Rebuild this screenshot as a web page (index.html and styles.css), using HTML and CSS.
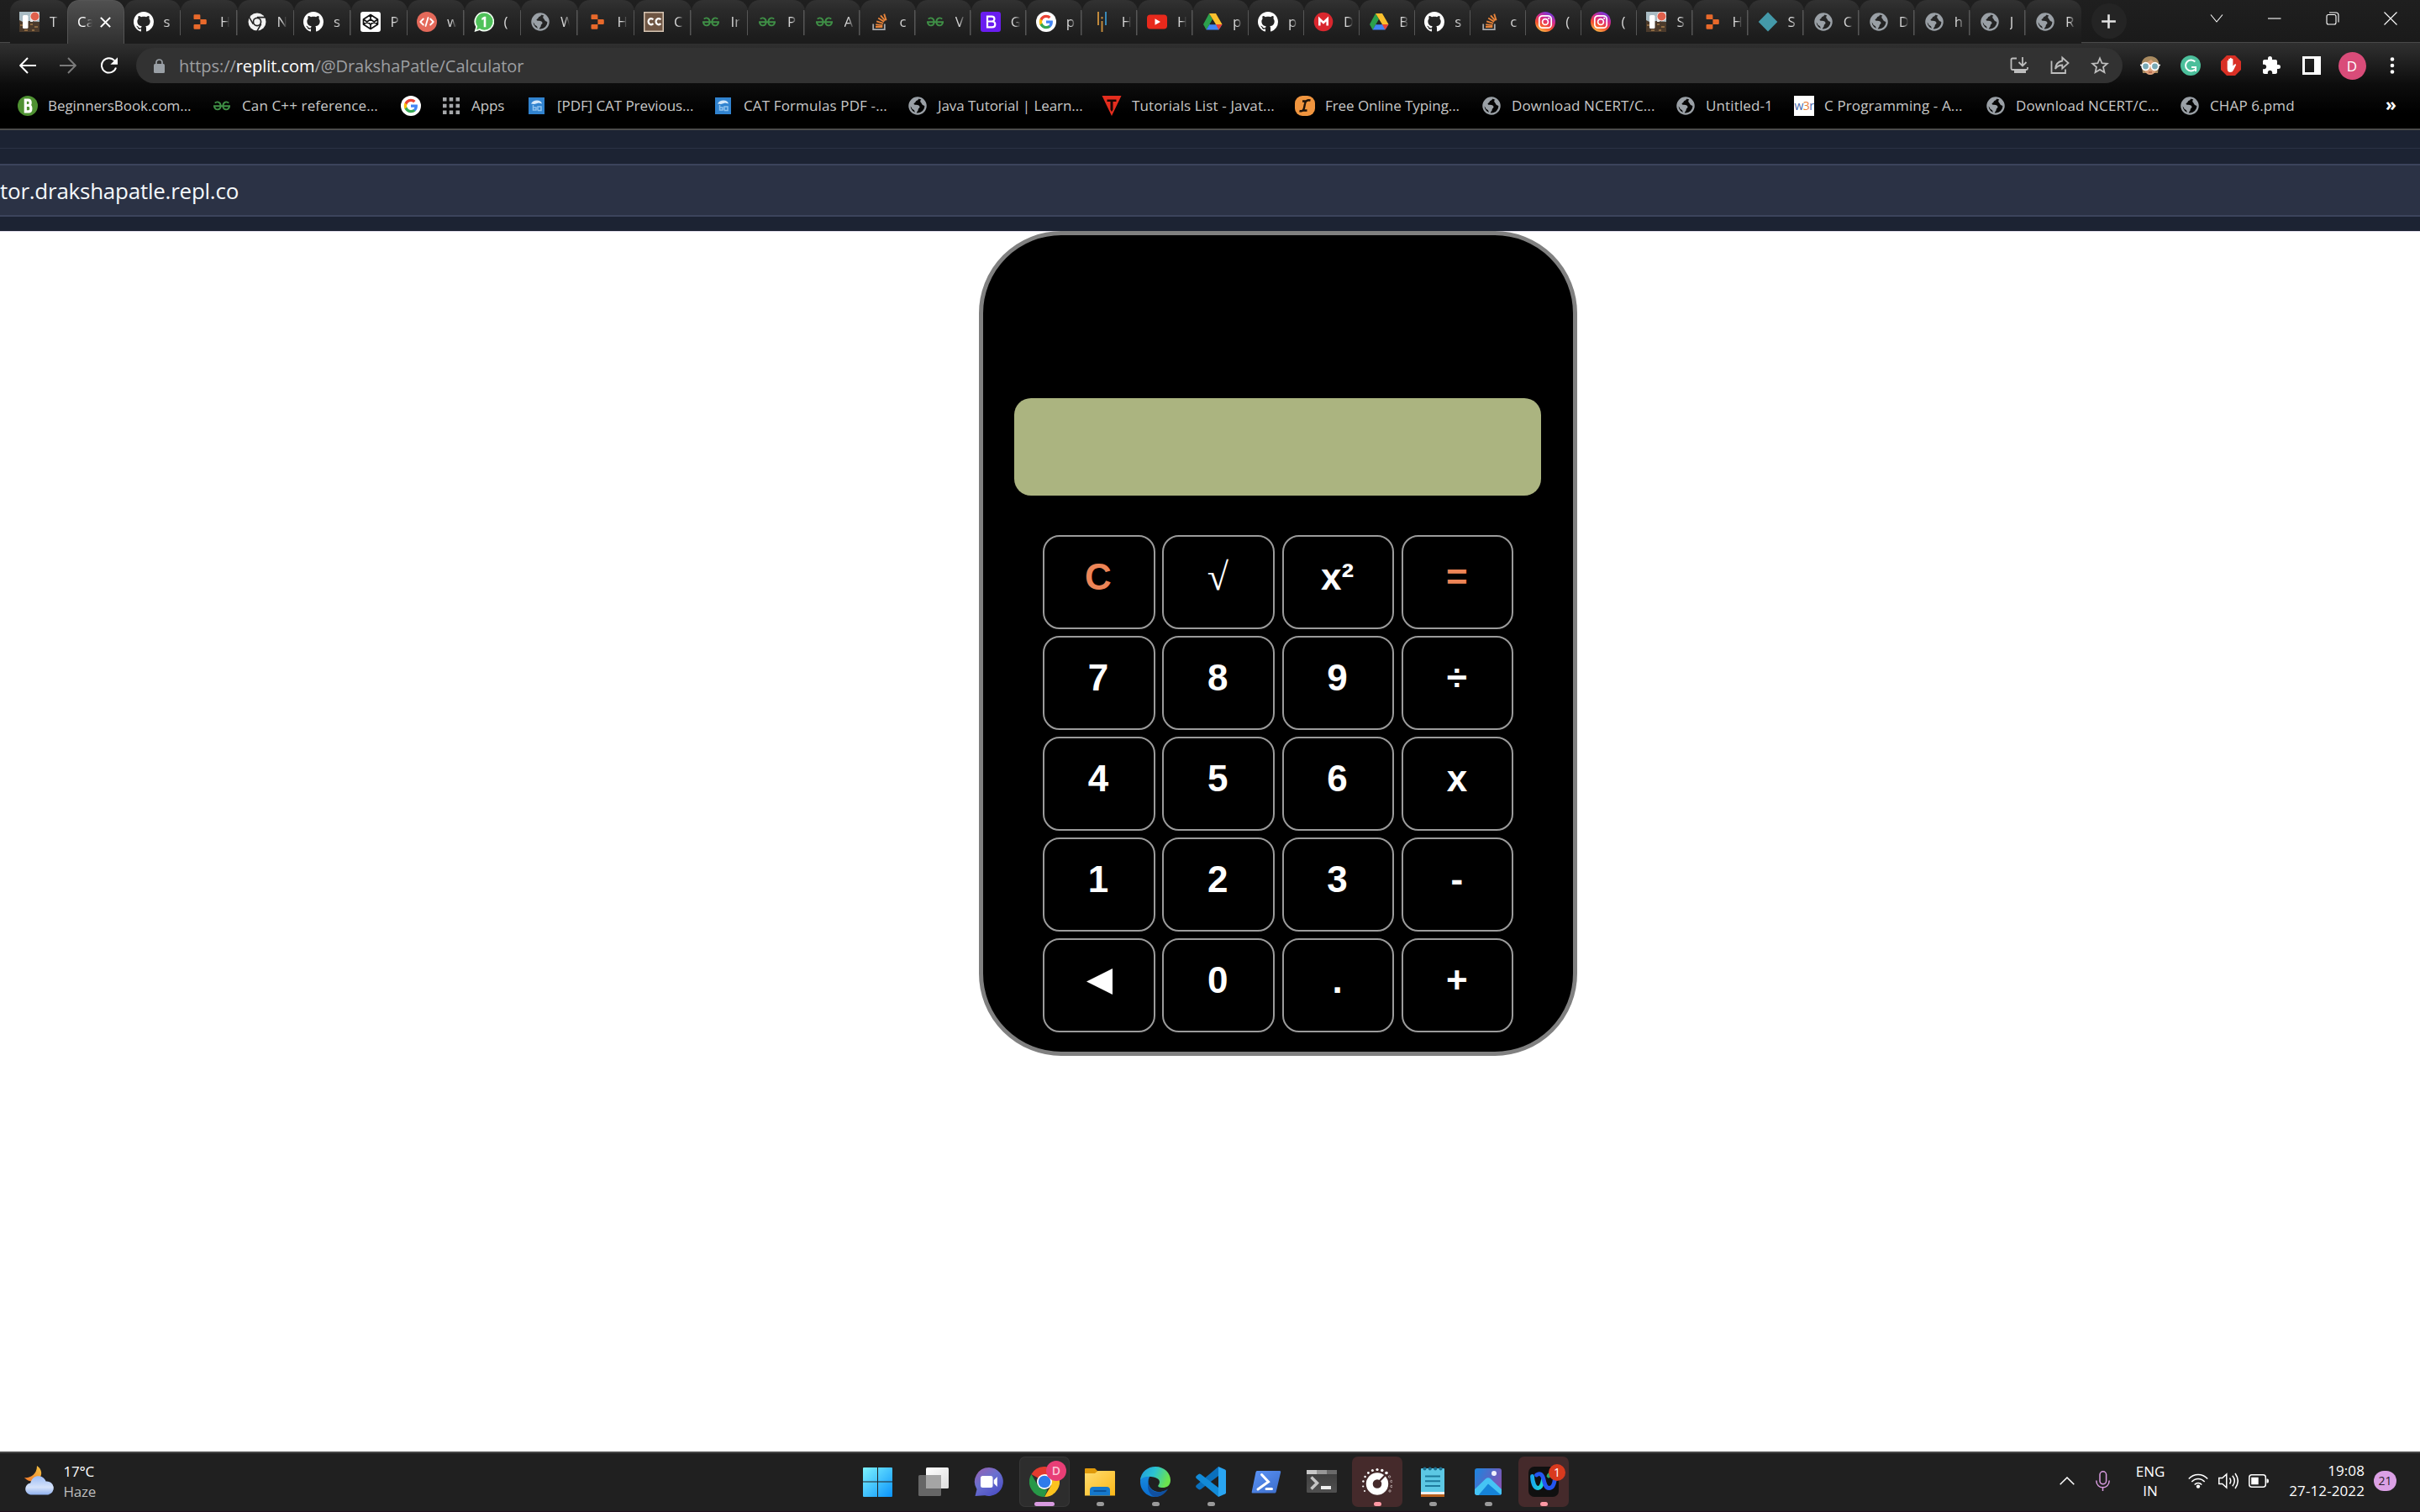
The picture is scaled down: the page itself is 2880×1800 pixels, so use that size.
FILE: index.html
```html
<!DOCTYPE html>
<html lang="en">
<head>
<meta charset="utf-8">
<title>Calculator</title>
<link rel="stylesheet" href="styles.css">
</head>
<body>
<svg class="defs" aria-hidden="true">
  <defs>
    <linearGradient id="g-ig" x1="0.2" y1="1" x2="0.7" y2="0"><stop offset="0" stop-color="#fdc84a"/><stop offset=".35" stop-color="#f5502f"/><stop offset=".65" stop-color="#d62a8c"/><stop offset="1" stop-color="#6b3ae0"/></linearGradient>
    <linearGradient id="g-win" x1="0" y1="0" x2="1" y2="1"><stop offset="0" stop-color="#7df3ff"/><stop offset="1" stop-color="#0a93fb"/></linearGradient>
    <linearGradient id="g-cloud" x1="0" y1="0" x2="0" y2="1"><stop offset="0" stop-color="#9dbdf5"/><stop offset=".6" stop-color="#d5e2fa"/><stop offset="1" stop-color="#8fb0ee"/></linearGradient>
    <linearGradient id="g-moon" x1="0" y1="1" x2="1" y2="0"><stop offset="0" stop-color="#f0762a"/><stop offset="1" stop-color="#f5c542"/></linearGradient>
    <linearGradient id="g-chat" x1="0" y1="0" x2="0.7" y2="1"><stop offset="0" stop-color="#9a5fae"/><stop offset=".5" stop-color="#6a70d0"/><stop offset="1" stop-color="#4c4fc4"/></linearGradient>
    <linearGradient id="g-fold" x1="0" y1="0" x2="1" y2="1"><stop offset="0" stop-color="#ffdc70"/><stop offset="1" stop-color="#fbb818"/></linearGradient>
    <linearGradient id="g-edge" x1="0" y1="0" x2="1" y2=".3"><stop offset="0" stop-color="#2099dd"/><stop offset=".5" stop-color="#2bc3d2"/><stop offset="1" stop-color="#6be34e"/></linearGradient>
    <linearGradient id="g-edge2" x1="0" y1="0" x2="0" y2="1"><stop offset="0" stop-color="#1a8fe0"/><stop offset="1" stop-color="#0a6dd0"/></linearGradient>
    <linearGradient id="g-ps" x1="0" y1="0" x2="1" y2="1"><stop offset="0" stop-color="#5a94f8"/><stop offset="1" stop-color="#3c6cc8"/></linearGradient>
    <linearGradient id="g-term" x1="0" y1="0" x2="0" y2="1"><stop offset="0" stop-color="#3c3c3c"/><stop offset="1" stop-color="#505050"/></linearGradient>
    <linearGradient id="g-photo" x1="0" y1="0" x2="1" y2=".5"><stop offset="0" stop-color="#1a86e0"/><stop offset="1" stop-color="#7f55b5"/></linearGradient>
    <linearGradient id="g-task" x1="0" y1="0" x2="1" y2="1"><stop offset="0" stop-color="#fff"/><stop offset="1" stop-color="#dedede"/></linearGradient>
    <linearGradient id="g-wx1" x1="0" y1="0" x2="1" y2="0"><stop offset="0" stop-color="#18a8ee"/><stop offset="1" stop-color="#1fe0d0"/></linearGradient>
  </defs>
  <symbol id="gh" viewBox="0 0 16 16"><path fill="#fff" d="M8 0C3.58 0 0 3.58 0 8c0 3.54 2.29 6.53 5.47 7.59.4.07.55-.17.55-.38 0-.19-.01-.82-.01-1.49-2.01.37-2.53-.49-2.69-.94-.09-.23-.48-.94-.82-1.13-.28-.15-.68-.52-.01-.53.63-.01 1.08.58 1.23.82.72 1.21 1.87.87 2.33.66.07-.52.28-.87.51-1.07-1.78-.2-3.64-.89-3.64-3.95 0-.87.31-1.59.82-2.15-.08-.2-.36-1.02.08-2.12 0 0 .67-.21 2.2.82.64-.18 1.32-.27 2-.27.68 0 1.36.09 2 .27 1.53-1.04 2.2-.82 2.2-.82.44 1.1.16 1.92.08 2.12.51.56.82 1.27.82 2.15 0 3.07-1.87 3.75-3.65 3.95.29.25.54.73.54 1.48 0 1.07-.01 1.93-.01 2.2 0 .21.15.46.55.38A8.013 8.013 0 0016 8c0-4.42-3.58-8-8-8z"/></symbol>
  <symbol id="rp" viewBox="0 0 24 24"><path fill="#e8692b" d="M5.700 3.200h5.500q1.200 0 1.200 1.200v4.700H5.700q-1.200 0-1.200-1.200V4.400q0-1.200 1.200-1.200zM12.400 9.100h6.200q1.200 0 1.200 1.200v3.400q0 1.200-1.200 1.200h-6.200zM5.700 14.900h6.700v4.700q0 1.200-1.200 1.200H5.700q-1.200 0-1.200-1.200v-3.500q0-1.200 1.200-1.200z"/></symbol>
  <symbol id="photo" viewBox="0 0 24 24"><path fill="#a9bcc4" d="M0 0h24v24H0z"/><path fill="#4b3a2b" d="M0 10l4 2 8-1 12 1v12H0z"/><path fill="#8d6a42" d="M1 15h3v2H1zM6 21h4v2H6zM13 14h3v2h-3zM18 17h4v2h-4zM15 21h3v2h-3z"/><rect x="4" y="4" width="6.500" height="16" rx="1.500" fill="#fff"/><path d="M13 4h3v8h-3z" fill="#e8e8e8"/><circle cx="18.500" cy="5.500" r="5.800" fill="#f2f2f2"/><circle cx="18.500" cy="5.500" r="5" fill="#e0604c"/></symbol>
  <symbol id="cr" viewBox="0 0 24 24"><circle cx="12" cy="12" r="10.500" fill="#f2f2f2"/><circle cx="12" cy="12" r="5.400" fill="#222"/><circle cx="12" cy="12" r="3.700" fill="#f2f2f2"/><path d="M12 6.600h10M7.300 14.700l-5-8.600M16.700 14.700l-5 8.600" stroke="#222" stroke-width="1.600"/></symbol>
  <symbol id="cp" viewBox="0 0 24 24"><rect width="24" height="24" rx="3" fill="#fff"/><path fill="none" stroke="#111" stroke-width="1.700" stroke-linejoin="round" d="M12 3.500l8.500 5.500v6L12 20.500 3.500 15V9zM12 3.500V9M12 15v5.500M3.500 9l8.500 6 8.500-6M3.500 15L12 9l8.500 6"/></symbol>
  <symbol id="code" viewBox="0 0 24 24"><circle cx="12" cy="12" r="12" fill="#e4695a"/><path fill="none" stroke="#fff" stroke-width="1.800" stroke-linecap="round" stroke-linejoin="round" d="M7.800 8.500L4.300 12l3.500 3.500M16.200 8.500l3.500 3.500-3.500 3.500M13.500 7l-3 10"/></symbol>
  <symbol id="wa" viewBox="0 0 24 24"><path fill="#f4fff4" d="M12.500 0a11.700 11.700 0 0 1 0 23.400c-2.200 0-4-.5-5.700-1.500L.5 24l1.800-6A11.700 11.700 0 0 1 12.500 0z"/><path fill="#4fc25a" d="M12.500 1.500a10 10 0 0 1 0 20.200c-2 0-3.800-.6-5.400-1.600l-4.200 1.300 1.300-4A10 10 0 0 1 12.500 1.500z"/><path fill="#fff" d="M9.300 7.600l3-1.800h2v12.400h-2.600V9L9.300 10z"/></symbol>
  <symbol id="globe" viewBox="0 0 24 24"><circle cx="12" cy="12" r="9.600" fill="none" stroke="#9aa0a6" stroke-width="2.300"/><path fill="#9aa0a6" d="M2.500 12l.5-3.500 4-5.500 6-1.300c.3 2.300-.2 3.600-2 4-1.600.5-1 2.200-2.600 2.700-1.500.5-.8 2.500.9 2.400 3.500-.2 5 .7 5.200 2.500.2 1.700-1.800 1.500-1.800 3.200 0 1.800-1.500 2.200-2.200 4.300l-1.800 0c0-2.500-.5-3.700-2.200-4.500C4.800 15.500 5 13 2.500 12zM17 4c-2 1.300-2.300 3-1 4 1.200 1 1 3 3 3.400 1.200.2 1.500 1 2.500 1.300L21 8z"/></symbol>
  <symbol id="cc" viewBox="0 0 24 24"><path fill="#d8c6b4" d="M0 0h24v24H0z"/><path fill="#6f5644" d="M1.500 1.500h21v21h-21z"/><path fill="none" stroke="#fff" stroke-width="2.300" d="M11.300 9.400A3.200 3.600 0 1 0 11.300 14M20.300 9.400A3.200 3.600 0 1 0 20.300 14"/></symbol>
  <symbol id="gfg" viewBox="0 0 24 24"><path fill="none" stroke="#3f8f46" stroke-width="1.900" d="M3.800 8.700C6 6.300 10.400 7.200 10.600 11.800c.2 5.300-6.100 6.300-7.600 1.200M20.200 8.700C18 6.300 13.600 7.200 13.400 11.800c-.2 5.300 6.100 6.300 7.600 1.200M2 12.300h20"/></symbol>
  <symbol id="so" viewBox="0 0 24 24"><path fill="none" stroke="#a7a9ac" stroke-width="1.800" d="M4.200 14.500v6.600h13.600v-6.600"/><path fill="none" stroke="#e8843a" stroke-width="1.900" d="M7 18h8.300M7.200 15.200l8.200.9M8.200 11.400l7.900 2.400M10.200 7.500l7 4.400M13 4.300l5.300 6.200M17.200 2.600l2.400 7.700"/></symbol>
  <symbol id="bs" viewBox="0 0 24 24"><rect width="24" height="24" rx="3" fill="#6a1df0"/><path fill="none" stroke="#fff" stroke-width="2.200" d="M8 5.600h5.200c4.300 0 4.300 5.900 0 5.900H8h5.700c4.800 0 4.800 6.900 0 6.900H8z"/></symbol>
  <symbol id="goog" viewBox="0 0 24 24"><circle cx="12" cy="12" r="12" fill="#fff"/><g transform="translate(3 3) scale(.75)"><path fill="#4285f4" d="M22.560 12.250c0-.78-.07-1.530-.2-2.250H12v4.260h5.920c-.26 1.370-1.040 2.530-2.210 3.310v2.770h3.570c2.080-1.920 3.280-4.740 3.280-8.090z"/><path fill="#34a853" d="M12 23c2.970 0 5.460-.98 7.280-2.660l-3.570-2.770c-.98.66-2.230 1.060-3.710 1.060-2.860 0-5.290-1.930-6.160-4.530H2.180v2.840C3.990 20.530 7.700 23 12 23z"/><path fill="#fbbc05" d="M5.840 14.090c-.22-.66-.35-1.360-.35-2.090s.13-1.430.35-2.090V7.070H2.180C1.430 8.550 1 10.220 1 12s.43 3.450 1.180 4.930l3.660-2.840z"/><path fill="#ea4335" d="M12 5.380c1.620 0 3.060.56 4.210 1.640l3.150-3.150C17.450 2.090 14.970 1 12 1 7.700 1 3.990 3.470 2.180 7.070l3.660 2.840c.87-2.600 3.300-4.530 6.160-4.530z"/></g></symbol>
  <symbol id="bars" viewBox="0 0 24 24"><path stroke="#c98f3d" stroke-width="1.900" d="M8 0v16M12.500 6v2.500M12.500 11v13"/><path stroke="#3a8fc0" stroke-width="1.900" d="M17 0v16"/></symbol>
  <symbol id="yt" viewBox="0 0 24 24"><rect y="3.500" width="24" height="17" rx="4" fill="#e8291c"/><path fill="#fff" d="M9.500 8.300l6.500 3.700-6.500 3.700z"/></symbol>
  <symbol id="drive" viewBox="0 0 24 24"><path fill="#2ca04c" d="M8 2L1 15l3.600 6.500L12 9z"/><path fill="#fbc02d" d="M8 2h8l7.500 13h-7.600z"/><path fill="#4285f4" d="M4.600 21.500h14.800l4.100-6.500H8.400z"/><path fill="#ea4335" d="M15.900 15h7.600l-4.100 6.500z"/><path fill="#242424" d="M12 9.500l3.600 5.700H8.600z"/></symbol>
  <symbol id="mm" viewBox="0 0 24 24"><circle cx="12" cy="12" r="11.300" fill="#d9272e"/><path fill="none" stroke="#fff" stroke-width="2.600" d="M7.300 16.500V8.500L12 13l4.700-4.500v8"/></symbol>
  <symbol id="ig" viewBox="0 0 24 24"><circle cx="12" cy="12" r="12" fill="url(#g-ig)"/><g fill="none" stroke="#fff" stroke-width="1.700"><rect x="4.800" y="4.800" width="14.400" height="14.400" rx="4"/><circle cx="12" cy="12" r="3.400"/></g><circle cx="16.200" cy="7.800" r="1.100" fill="#fff"/></symbol>
  <symbol id="dia" viewBox="0 0 24 24"><path fill="#4499a9" d="M12 .5L23.300 12 12 23.500.7 12z"/></symbol>
  <symbol id="bb" viewBox="0 0 24 24"><circle cx="12" cy="12" r="12" fill="#4f9132"/><path fill="none" stroke="#fff" stroke-width="3.200" d="M9.300 5.200h3.400c3.300 0 3.300 6.300 0 6.300H9.300h3.800c3.700 0 3.700 7.300 0 7.300H9.300z"/></symbol>
  <symbol id="apps" viewBox="0 0 24 24"><path fill="#a6a8ab" d="M2 2h4.500v4.500H2zM9.700 2h4.500v4.500H9.700zM17.500 2H22v4.500h-4.500zM2 9.700h4.500v4.500H2zM9.700 9.700h4.500v4.500H9.700zM17.500 9.700H22v4.500h-4.500zM2 17.500h4.500V22H2zM9.700 17.500h4.500V22H9.700zM17.500 17.500H22V22h-4.500z"/></symbol>
  <symbol id="pdf" viewBox="0 0 24 24"><path fill="#3183cf" d="M2 2h19v20H2z"/><path fill="#d4e8fa" d="M5 9.500q2-4 7-4t6 4l-4-1-5 1.500z"/><path fill="none" stroke="#8fc2ee" stroke-width="1.500" d="M7.500 11v6h3.500v-3h-3M13 17.500v-4.500h4v4.500h-4"/></symbol>
  <symbol id="tt" viewBox="0 0 24 24"><path fill="#e52d1e" d="M.5 0h23L12 24z"/><path fill="#160402" d="M6.500 4.500h11V7h-4v9.500L12 19l-1.500-2.500V7h-4z"/></symbol>
  <symbol id="typ" viewBox="0 0 24 24"><rect width="24" height="24" rx="9" fill="#f0953f"/><path fill="none" stroke="#1d120a" stroke-width="2.400" d="M18.500 5.500c-4-1-6 1-6.500 4l-1 5c-.6 3-2.500 4.500-5.500 3.500M9 6.500h5M9.500 17.500h5"/></symbol>
  <symbol id="cloudmoon" viewBox="0 0 36 35"><path fill="url(#g-moon)" d="M15 0c5.500 3.500 6.800 10 3.300 14.500C14 20 5 20 0 14c6 1 15-3 15-14z"/><path fill="url(#g-cloud)" d="M7.500 34.500a7 7 0 0 1-.3-13.900C9 14 13 12 17 12.200c4.500.2 7.500 3 8.600 6.300a8 8 0 0 1 2.400 16z"/></symbol>
</svg>

<header class="browser">
  <nav class="tabs">
    <div class="tab"><svg><use href="#photo"/></svg><span>T</span></div>
    <div class="tab active"><span>Ca</span><svg class="close" viewBox="0 0 12 12"><path d="M.8.8l10.400 10.400M11.200.8L.8 11.200"/></svg></div>
    <div class="tab"><svg><use href="#gh"/></svg><span>s</span></div>
    <div class="tab"><svg><use href="#rp"/></svg><span>H</span></div>
    <div class="tab"><svg><use href="#cr"/></svg><span>N</span></div>
    <div class="tab"><svg><use href="#gh"/></svg><span>s</span></div>
    <div class="tab"><svg><use href="#cp"/></svg><span>P</span></div>
    <div class="tab"><svg><use href="#code"/></svg><span>w</span></div>
    <div class="tab"><svg><use href="#wa"/></svg><span>(</span></div>
    <div class="tab"><svg><use href="#globe"/></svg><span>W</span></div>
    <div class="tab"><svg><use href="#rp"/></svg><span>H</span></div>
    <div class="tab"><svg><use href="#cc"/></svg><span>C</span></div>
    <div class="tab"><svg><use href="#gfg"/></svg><span>In</span></div>
    <div class="tab"><svg><use href="#gfg"/></svg><span>P</span></div>
    <div class="tab"><svg><use href="#gfg"/></svg><span>A</span></div>
    <div class="tab"><svg><use href="#so"/></svg><span>c</span></div>
    <div class="tab"><svg><use href="#gfg"/></svg><span>V</span></div>
    <div class="tab"><svg><use href="#bs"/></svg><span>G</span></div>
    <div class="tab"><svg><use href="#goog"/></svg><span>p</span></div>
    <div class="tab"><svg><use href="#bars"/></svg><span>H</span></div>
    <div class="tab"><svg><use href="#yt"/></svg><span>H</span></div>
    <div class="tab"><svg><use href="#drive"/></svg><span>p</span></div>
    <div class="tab"><svg><use href="#gh"/></svg><span>p</span></div>
    <div class="tab"><svg><use href="#mm"/></svg><span>D</span></div>
    <div class="tab"><svg><use href="#drive"/></svg><span>B</span></div>
    <div class="tab"><svg><use href="#gh"/></svg><span>s</span></div>
    <div class="tab"><svg><use href="#so"/></svg><span>c</span></div>
    <div class="tab"><svg><use href="#ig"/></svg><span>(</span></div>
    <div class="tab"><svg><use href="#ig"/></svg><span>(</span></div>
    <div class="tab"><svg><use href="#photo"/></svg><span>S</span></div>
    <div class="tab"><svg><use href="#rp"/></svg><span>H</span></div>
    <div class="tab"><svg><use href="#dia"/></svg><span>S</span></div>
    <div class="tab"><svg><use href="#globe"/></svg><span>C</span></div>
    <div class="tab"><svg><use href="#globe"/></svg><span>D</span></div>
    <div class="tab"><svg><use href="#globe"/></svg><span>h</span></div>
    <div class="tab"><svg><use href="#globe"/></svg><span>J</span></div>
    <div class="tab last"><svg><use href="#globe"/></svg><span>R</span></div>
    <div class="newtab"><svg viewBox="0 0 20 20"><path d="M10 1.200v17.600M1.200 10h17.600"/></svg></div>
    <div class="winctl">
      <svg viewBox="0 0 16 16"><path d="M1 3.500l7 8.500 7-8.500"/></svg>
      <svg viewBox="0 0 16 16"><path d="M0 8h15.500"/></svg>
      <svg viewBox="0 0 16 16"><rect x="1" y="3.500" width="11" height="11.500" rx="2"/><path d="M4 1h8q3 0 3 3v8.500"/></svg>
      <svg viewBox="0 0 16 16"><path d="M.5.5l15 15M15.500.5l-15 15"/></svg>
    </div>
  </nav>

  <div class="toolbar">
    <div class="navbtns">
      <svg viewBox="0 0 20 20"><path d="M20 10H1.500M10 1L1.200 10 10 19"/></svg>
      <svg class="dim" viewBox="0 0 20 20"><path d="M0 10h18.500M10 1l8.800 9L10 19"/></svg>
      <svg viewBox="0 0 22 20"><path d="M17.300 4.200A8.700 8.700 0 1 0 19 12.500"/><path class="solid" d="M21 .2v8.600h-8.600z"/></svg>
    </div>
    <div class="omnibox">
      <svg class="lock" viewBox="0 0 13 17"><rect y="6" width="13" height="11" rx="1.500" fill="#9aa0a6"/><path d="M3 7V4.300a3.500 3.300 0 0 1 7 0V7" fill="none" stroke="#9aa0a6" stroke-width="1.700"/></svg>
      <span class="url">https://<b>replit.com</b>/@DrakshaPatle/Calculator</span>
      <div class="omniicons">
        <svg viewBox="0 0 24 24"><path d="M9 3.500H4q-1.500 0-1.500 1.500v10.500q0 1.500 1.500 1.500h16.500q1.500 0 1.500-1.500V14M16 2v10M11.500 8l4.500 4.500L20.500 8"/><path class="fill" d="M6 17.500h14v3.500H6z"/></svg>
        <svg viewBox="0 0 24 24"><path d="M2.500 6.500v14.500h16.500v-4.500M15.300 6.500V2.500L22.500 9l-7.200 6.500v-4c-4.500 0-6.300 1.500-8.300 4.500.5-5 3-8.700 8.300-9.500z"/></svg>
        <svg viewBox="0 0 24 24"><path class="fill" d="M23 9.100l-7.900-.7L12 1 8.900 8.400 1 9.100l6 5.200L5.200 22l6.800-4.100 6.800 4.100-1.800-7.700zM12 15.800l-4.100 2.500 1.100-4.700-3.700-3.200 4.800-.4L12 5.600l1.900 4.400 4.800.4-3.700 3.200 1.100 4.700z"/></svg>
      </div>
    </div>
    <div class="exts">
      <svg viewBox="0 0 24 24"><path fill="#a88a60" d="M2 13C.5 6 5 1 12 1s11.500 5 10 12l-1 8H3z"/><path fill="#dba07a" d="M5 10l8-5 6 5.500V17c-1 4-4 6-7 6S6 21 5 17z"/><circle cx="6.500" cy="13" r="4.300" fill="#79a9b5" stroke="#fff" stroke-width="1.800"/><circle cx="17.500" cy="13" r="4.300" fill="#79a9b5" stroke="#fff" stroke-width="1.800"/><path stroke="#fff" stroke-width="1.600" d="M10 12h4M0 11.500h2M22 11.500h2"/><path stroke="#a8553e" stroke-width="1.300" d="M10 20h4"/></svg>
      <svg viewBox="0 0 24 24"><circle cx="12" cy="12" r="12" fill="#4cbf9b"/><path fill="none" stroke="#fff" stroke-width="2" d="M17.300 7.500A6.500 6.500 0 1 0 17 16.700M18 19v-5h-5"/></svg>
      <svg viewBox="0 0 24 24"><path fill="#d93025" d="M7 0h10l7 7v10l-7 7H7l-7-7V7z"/><path fill="#fff" d="M7.700 6.200q.9-.6 1.500 0V4.200q.8-1 1.700 0V3.200q.9-.9 1.800 0v1q.9-.8 1.700.2v8l2-2q1.400-.6 1.800.5l-3.200 6.500q-1 2.600-3.700 2.600-3.600 0-3.600-4.500z"/></svg>
      <svg viewBox="0 0 24 24"><path fill="#fff" d="M20.500 11H19V7c0-1.100-.9-2-2-2h-4V3.500a2.500 2.500 0 0 0-5 0V5H4c-1.100 0-1.990.9-1.990 2v3.800H3.500c1.490 0 2.700 1.210 2.700 2.700s-1.210 2.700-2.700 2.700H2V20c0 1.100.9 2 2 2h3.800v-1.500c0-1.490 1.210-2.700 2.700-2.700s2.700 1.210 2.700 2.700V22H17c1.100 0 2-.9 2-2v-4h1.500a2.500 2.500 0 0 0 0-5z"/></svg>
      <svg viewBox="0 0 24 24"><path fill="#fff" fill-rule="evenodd" d="M1 1h22v22H1zM4 4v16h11V4z"/></svg>
      <span class="avatar">D</span>
      <svg viewBox="0 0 24 24"><g fill="#fff"><circle cx="12" cy="4.500" r="2.300"/><circle cx="12" cy="12" r="2.300"/><circle cx="12" cy="19.500" r="2.300"/></g></svg>
    </div>
  </div>

  <div class="bookmarks">
    <a><svg><use href="#bb"/></svg>BeginnersBook.com...</a>
    <a><svg><use href="#gfg"/></svg><span class="loose">Can C++ reference...</span></a>
    <a><svg><use href="#goog"/></svg></a>
    <a><svg><use href="#apps"/></svg>Apps</a>
    <a><svg><use href="#pdf"/></svg>[PDF] CAT Previous...</a>
    <a><svg><use href="#pdf"/></svg><span class="loose">CAT Formulas PDF -...</span></a>
    <a><svg><use href="#globe"/></svg>Java Tutorial | Learn...</a>
    <a><svg><use href="#tt"/></svg><span class="loose">Tutorials List - Javat...</span></a>
    <a><svg><use href="#typ"/></svg>Free Online Typing...</a>
    <a><svg><use href="#globe"/></svg><span class="loose">Download NCERT/C...</span></a>
    <a><svg><use href="#globe"/></svg><span class="loose">Untitled-1</span></a>
    <a><span class="w3">w<i>3</i>r</span><span class="loose">C Programming - A...</span></a>
    <a><svg><use href="#globe"/></svg><span class="loose">Download NCERT/C...</span></a>
    <a><svg><use href="#globe"/></svg><span class="loose">CHAP 6.pmd</span></a>
    <span class="more">»</span>
  </div>
</header>

<div class="replbar">
  <div class="strip"></div>
  <div class="address">tor.drakshapatle.repl.co</div>
</div>

<main class="page">
  <section class="calculator">
    <div class="display"></div>
    <div class="keys">
      <button class="accent">C</button><button class="root">√</button><button>x²</button><button class="accent">=</button>
      <button>7</button><button>8</button><button>9</button><button>÷</button>
      <button>4</button><button>5</button><button>6</button><button>x</button>
      <button>1</button><button>2</button><button>3</button><button>-</button>
      <button aria-label="Backspace"><svg viewBox="0 0 31 31"><path fill="#fff" d="M31 0v31L0 15.500z"/></svg></button><button>0</button><button>.</button><button>+</button>
    </div>
  </section>
</main>

<footer class="taskbar">
  <div class="weather"><svg><use href="#cloudmoon"/></svg><p>17°C<br><span>Haze</span></p></div>
  <div class="apps">
    <div class="app"><svg viewBox="0 0 36 36"><path fill="url(#g-win)" d="M1 1h16v16.500H0V2q0-1 1-1zM18 1h16q1 0 1 1v15.500H18zM0 18.500h17V36H1q-1 0-1-1zM18 18.500h17V35q0 1-1 1H18z"/></svg></div>
    <div class="app"><svg viewBox="0 0 36 36"><rect y="10" width="27" height="25" rx="1.500" fill="#666"/><rect x="9" y="1" width="27" height="25" rx="1.500" fill="url(#g-task)"/><path fill="#a5a5a5" d="M9 10h18v16H9z"/></svg></div>
    <div class="app"><svg viewBox="0 0 36 36"><path fill="url(#g-chat)" d="M18 1a17 17 0 1 1-5 33.300L1.500 35l2-8A17 17 0 0 1 18 1z"/><rect x="8" y="11" width="14.500" height="14" rx="2.500" fill="#fff"/><path fill="#fff" d="M23.800 16l4-4v12l-4-4z"/></svg></div>
    <div class="app current"><svg viewBox="0 0 36 36"><path fill="#e33b2e" d="M18 18L2.400 9a18 18 0 0 1 31.200 0z"/><path fill="#fcc31e" d="M18 9h15.600A18 18 0 0 1 18 36l7.800-13.500z"/><path fill="#279847" d="M2.400 9l7.800 13.500L18 27l3.500.5L18 36A18 18 0 0 1 2.400 9z"/><circle cx="18" cy="18" r="9" fill="#fff"/><circle cx="18" cy="18" r="7.300" fill="#2f7bea"/></svg><span class="badge pink">D</span><i class="mark wide"></i></div>
    <div class="app"><svg viewBox="0 0 36 36"><path fill="#e09a0a" d="M1 2h11l4 4-3 4H0V3q0-1 1-1z"/><path fill="url(#g-fold)" d="M0 8h12l3.500-3H35q1 0 1 1v28.500H0z"/><path fill="#1478cc" d="M6 34.500V28q0-4 4-4h16q4 0 4 4v6.500z"/><path stroke="#0a4f94" stroke-width="1.800" d="M10.500 29h15"/></svg><i class="mark"></i></div>
    <div class="app"><svg viewBox="0 0 36 36"><path fill="url(#g-edge2)" d="M0 18C0 8 8 4 14 9c-5 3-6 11-2 16 4 5 11 7 19 3-4 7-12 9-18 7.500C5 33 0 26 0 18z"/><path fill="#1050a0" d="M13 13c-4 4-4 10 0 14 5 5 13 4 20-.5C30 32 24 36 18 36 9 34 6 22 13 13z"/><path fill="url(#g-edge)" d="M0 16C1 6 9 0 18 0c11 0 18 8 18 16 0 7-5 9-9 9-5 0-7-1.500-5-3.500 3-5-1-8-6-9C9 11 3 12 0 16z"/></svg><i class="mark"></i></div>
    <div class="app"><svg viewBox="0 0 36 36"><path fill="#0a70bd" d="M27 0L.8 22q-1.300 1.500 0 3l2.500 2q1.300.8 2.700 0L27 11z"/><path fill="#128bd8" d="M27 36L.8 14q-1.300-1.500 0-3l2.500-2Q4.600 8.200 6 9l21 16z"/><path fill="#29a5f2" d="M27 0l8 3.500q1 .5 1 1.500v26q0 1-1 1.500L27 36z"/></svg><i class="mark"></i></div>
    <div class="app"><svg viewBox="0 0 36 36"><path fill="url(#g-ps)" d="M7 5h27q1.500 0 1.200 1.500l-5.500 23.500q-.4 1.500-1.700 1.500H1.700Q.3 31.500.7 30L5.500 6.500Q5.800 5 7 5z"/><path fill="none" stroke="#fff" stroke-width="3" stroke-linecap="round" d="M12.500 9.500l8 8.500-12.500 9M18 26.500h6.500"/></svg></div>
    <div class="app"><svg viewBox="0 0 36 36"><rect y="4" width="36" height="27" rx="1.500" fill="url(#g-term)"/><path fill="#c8c8c8" d="M0 4h12v5H0z"/><path fill="#979797" d="M12 4h12.500v5H12z"/><path fill="#6a6a6a" d="M24.500 4H36v5H24.500z"/><path fill="none" stroke="#c4c4c4" stroke-width="3.500" d="M5.500 12.500l7 7-7 7"/><path fill="#eee" d="M17 23h12v4H17z"/></svg></div>
    <div class="app alert"><svg viewBox="0 0 36 36"><circle cx="18" cy="20.500" r="13.200" fill="#fff"/><circle cx="18" cy="20.500" r="5.300" fill="#452a2b"/><path stroke="#452a2b" stroke-width="2.200" d="M20 18l9-9.500"/><g fill="#fff"><circle cx="3" cy="29" r="1"/><circle cx="1.200" cy="23.500" r="1.100"/><circle cx="1.400" cy="17.500" r="1.200"/><circle cx="3.600" cy="12" r="1.300"/><circle cx="7.400" cy="7.500" r="1.400"/><circle cx="12.400" cy="4.500" r="1.500"/><circle cx="18" cy="3.500" r="1.600"/><circle cx="23.800" cy="4.500" r="1.700"/><circle cx="29" cy="7.500" r="1.800"/></g><g fill="none" stroke="#c9bcbc" stroke-width=".8"><circle cx="32.600" cy="12" r="1.200"/><circle cx="34.800" cy="17.500" r="1.200"/><circle cx="34.900" cy="23.500" r="1.200"/><circle cx="33" cy="29" r="1.200"/></g></svg><i class="mark rose"></i></div>
    <div class="app"><svg viewBox="0 0 36 36"><path fill="#b8601c" d="M4 32h28v4H4z"/><path fill="#f0f0f0" d="M4 29h28v4H4z"/><path fill="#5cc8e4" d="M5 2h26q1 0 1 1v27H4V3q0-1 1-1z"/><path stroke="#1d7a9c" stroke-width="2" d="M9 11.500h18M9 17.200h18M9 23h18"/><g fill="#1d6f8f"><circle cx="8.500" cy="2.500" r="2"/><circle cx="14.800" cy="2.500" r="2"/><circle cx="21.200" cy="2.500" r="2"/><circle cx="27.500" cy="2.500" r="2"/></g></svg><i class="mark"></i></div>
    <div class="app"><svg viewBox="0 0 36 36"><rect x="2" y="2" width="32" height="32" rx="3" fill="url(#g-photo)"/><path fill="#1583d8" d="M6 34l11-13 3-1 14 10v1q0 3-3 3z"/><path fill="#45c4f5" d="M2 27l13-12.500q3-2.500 6 0L34 27v4q0 1.500-1 2.500L18 20.500 6.500 34H5q-3 0-3-3z"/><circle cx="25" cy="8" r="3" fill="#f1f1fa"/></svg><i class="mark"></i></div>
    <div class="app alert"><svg viewBox="0 0 36 36"><rect width="36" height="36" rx="7" fill="#101010"/><g fill="none" stroke-width="4.800" stroke-linecap="round"><path stroke="#2aa866" d="M24 11c2-3 6-3 7.500 0"/><path stroke="url(#g-wx1)" d="M4.500 11.500c.5 8 3 14 7 14 3.500 0 5-5 6-10"/><path stroke="#2456f0" d="M9.500 10c4-3 7-1 8.500 5 1.200 5.500 2.500 10.500 6.500 10.500 4.500 0 6.500-6 7-12"/></g></svg><span class="badge red">1</span><i class="mark rose"></i></div>
  </div>
  <div class="tray">
    <svg class="chev" viewBox="0 0 18 10"><path d="M.7 9.300L9 1l8.300 8.300"/></svg>
    <svg class="mic" viewBox="0 0 17 24"><rect x="5" y=".8" width="7.600" height="15" rx="3.800"/><path d="M.8 11.500c0 11 15.400 11 15.400 0M8.500 20v4"/></svg>
    <p class="lang">ENG<br>IN</p>
    <svg class="wifi" viewBox="0 0 24 18"><path d="M.8 6.500c6-6.800 16.400-6.800 22.400 0M4.300 10c4.300-4.800 11.100-4.800 15.400 0M7.700 13.400c2.500-2.700 6.100-2.700 8.600 0"/><circle class="dot" cx="12" cy="15.600" r="2.200"/></svg>
    <svg class="vol" viewBox="0 0 24 20"><path d="M.8 6.500v7h4l5 4.500V2l-5 4.500zM13.500 6.500q2.500 3.500 0 7M16.800 3.800q5 6.200 0 12.400M20 1q6.500 9 0 18"/></svg>
    <svg class="bat" viewBox="0 0 24 16"><rect x=".8" y=".8" width="19.500" height="14.400" rx="3"/><path class="dot" d="M3.200 3.800h8.500v8.500H3.200zM21.500 5.500h1q1.500 0 1.500 2.500t-1.500 2.500h-1z"/></svg>
    <p class="clock">19:08<br>27-12-2022</p>
    <span class="count">21</span>
  </div>
</footer>
</body>
</html>
```
FILE: styles.css
```css
* { box-sizing: border-box; }
html, body { margin: 0; height: 100%; }
body {
  width: 2880px;
  height: 1800px;
  display: flex;
  flex-direction: column;
  overflow: hidden;
  background: #fff;
  font-family: "Open Sans", "Noto Sans", sans-serif;
}
p { margin: 0; }
.defs { position: absolute; width: 0; height: 0; }

/* Browser frame */
.browser {
  flex: none;
  height: 155px;
  border-bottom: 2px solid #4b4b4b;
  background: linear-gradient(#1a1a1a 0 50px, #303030 51px, #2a2a2a 60px, #0d0d0d 100px, #000 135px);
}
.tabs {
  height: 51px;
  padding-left: 12px;
  display: grid;
  grid-template-columns: 68px repeat(13, 67.5px) repeat(23, 66.07px) 66px 1fr;
  border-bottom: 1.500px solid #494949;
  background: linear-gradient(#1f1f1f, #1a1a1a);
}
.tab {
  display: flex;
  align-items: flex-start;
  gap: 12px;
  padding: 14px 0 0 11px;
  border-radius: 14px 14px 0 0;
  background:
    linear-gradient(#565656, #565656) right 12px / 1.500px 30px no-repeat,
    linear-gradient(#323232, #2a2a2a 12px, #1c1c1c 45px);
}
.tab:first-child, .tab.last { background: linear-gradient(#323232, #2a2a2a 12px, #1c1c1c 45px); }
.tab.active {
  height: 52px;
  gap: 6px;
  background: linear-gradient(#505050, #303030);
  border: solid #555;
  border-width: 1px 1px 0;
}
.tab svg { flex: none; width: 24px; height: 24px; }
.tab span {
  width: 18px;
  height: 26px;
  margin-top: -1px;
  font-size: 17px;
  line-height: 25px;
  color: #d4d4d4;
  white-space: nowrap;
  -webkit-mask-image: linear-gradient(90deg, #000 5px, transparent 11px);
  mask-image: linear-gradient(90deg, #000 5px, transparent 11px);
}
.tab.active span {
  width: 21px;
  color: #fff;
  margin-top: -2px;
  -webkit-mask-image: linear-gradient(90deg, #000 8px, transparent 18px);
  mask-image: linear-gradient(90deg, #000 8px, transparent 18px);
}
.tab .close { width: 13px; height: 13px; margin-top: 5px; stroke: #fff; stroke-width: 1.900; }
.newtab {
  justify-self: center;
  margin-top: 4px;
  width: 42px;
  height: 42px;
  border-radius: 50%;
  background: #242424;
  display: grid;
  place-items: center;
}
.newtab svg { width: 19px; height: 19px; stroke: #e4e4e4; stroke-width: 2.700; }
.winctl { display: flex; gap: 53px; justify-content: flex-end; padding: 14px 27px 0 0; }
.winctl svg { width: 16px; height: 16px; fill: none; stroke: #fff; stroke-width: 1.100; }

.toolbar { height: 54px; display: flex; align-items: center; }
.navbtns { width: 162px; padding-left: 23px; display: flex; gap: 28px; }
.navbtns svg { width: 20px; height: 20px; fill: none; stroke: #fff; stroke-width: 2; }
.navbtns svg:last-child { width: 22px; }
.navbtns .solid { fill: #fff; stroke: none; }
.navbtns .dim { stroke: #7a7a7a; }
.omnibox {
  width: 2364px;
  height: 42px;
  border-radius: 21px;
  background: #323232;
  display: flex;
  align-items: center;
  padding: 0 15px 0 21px;
}
.lock { width: 13px; height: 17px; margin-right: 17px; }
.url { font-size: 20px; line-height: 28px; padding-top: 2px; color: #9d9fa2; letter-spacing: -.06px; }
.url b { font-weight: 400; color: #fff; }
.omniicons { margin-left: auto; display: flex; gap: 24px; }
.omniicons svg { width: 24px; height: 24px; fill: none; stroke: #bdbdbd; stroke-width: 1.800; }
.omniicons .fill { fill: #bdbdbd; stroke: none; }
.exts { display: flex; align-items: center; gap: 24px; padding-left: 21px; }
.exts svg { width: 24px; height: 24px; }
.avatar {
  width: 33px;
  height: 33px;
  margin: 0 -4.500px;
  border-radius: 50%;
  background: #d94c79;
  color: #fff;
  font-size: 17px;
  line-height: 33px;
  text-align: center;
}

.bookmarks {
  height: 42px;
  padding-left: 21px;
  display: grid;
  grid-template-columns: 231px 225px 48px 102px 222px 231px 231px 230px 222px 231px 141px 228px 231px 245px 1fr;
  align-items: center;
  font-size: 17px;
  letter-spacing: -.07px;
  line-height: 24px;
  color: #c7c7c7;
}
.bookmarks a { display: flex; gap: 12px; white-space: nowrap; }
.bookmarks a > svg, .w3 { flex: none; width: 24px; height: 24px; }
.bookmarks .loose { letter-spacing: .13px; }
.w3 { background: #fff; color: #4668ad; font: 14px/24px "Open Sans", sans-serif; letter-spacing: -.5px; text-align: center; }
.w3 i { font-style: normal; color: #e8803a; }
.more { color: #fff; font-weight: 700; font-size: 21px; line-height: 20px; margin-top: -4px; }

/* Workspace header */
.replbar {
  flex: none;
  height: 120px;
  background: #1c2333;
}
.strip { height: 40px; padding-top: 21px; }
.strip::after { content: ""; display: block; height: 1px; background: #2b3245; }
.address {
  height: 63px;
  border: solid #3c445c;
  border-width: 2px 0;
  background: #2b3245;
  color: #f5f9fc;
  font-size: 26px;
  letter-spacing: -.25px;
  line-height: 60px;
}

/* Calculator */
.page { flex: 1; border-top: 1px solid #e4e0ee; background: #fff; }
.calculator {
  width: 712px;
  height: 982px;
  margin: -1px 0 0 1165px;
  padding: 194px 38px 0 37px;
  border: 5px solid #808080;
  border-radius: 98px;
  background: #000;
}
.display { height: 116px; border-radius: 20px; background: #abb480; }
.keys {
  margin: 47px 31px 0 34px;
  display: grid;
  grid-template-columns: repeat(4, 133.500px);
  grid-auto-rows: 111.500px;
  gap: 8.600px 8.800px;
}
.keys button {
  margin: 0;
  padding: 0 1.500px 12px 0;
  border: 2px solid #9b9b9b;
  border-radius: 20px;
  background: #000;
  color: #fff;
  font: 700 44px/48px "Liberation Sans", Arial, sans-serif;
}
.keys .accent { color: #ed8557; }
.keys .root { font: 400 46px/48px "Liberation Serif", serif; }
.keys svg { width: 31px; height: 31px; display: block; margin: 0 auto; position: relative; top: 1px; left: 1px; }

/* Taskbar */
.taskbar {
  flex: none;
  height: 72px;
  border-top: 2px solid #474747;
  border-bottom: 1px solid #1f0f1c;
  background: #202020;
  display: grid;
  grid-template-columns: 1012px 1fr auto;
  color: #fff;
  font-size: 17px;
  line-height: 24px;
}
.weather { display: flex; gap: 10.500px; padding: 10px 0 0 29px; letter-spacing: -.2px; }
.weather svg { width: 36px; height: 35px; margin-top: 5px; }
.weather span { color: #bdbdbd; }
.taskbar .apps { display: flex; gap: 6px; padding: 4px 0 0 3px; }
.app { position: relative; width: 60px; height: 60px; border-radius: 7px; display: grid; place-items: center; }
.app svg { width: 36px; height: 36px; }
.app.current { background: #2d2d2d; box-shadow: inset 0 0 0 1px #373737; }
.app.alert { background: #452a2b; }
.mark { position: absolute; bottom: 1px; left: calc(50% - 4.500px); width: 9px; height: 5px; border-radius: 3px; background: #9a9a9a; }
.mark.wide { width: 24px; left: 18px; background: #d89be0; }
.mark.rose { background: #ff99a4; }
.badge { position: absolute; border-radius: 50%; text-align: center; color: #fff; }
.badge.pink { left: 32px; top: 5px; width: 24px; height: 24px; background: #e83e76; font: 600 14px/24px "Open Sans", sans-serif; color: #fbc6d8; }
.badge.red { left: 36px; top: 9px; width: 20px; height: 20px; background: #d93a1e; font-size: 14px; line-height: 20px; }
.tray { display: flex; align-items: center; padding: 0 28px 3px 0; }
.tray svg { fill: none; stroke: #fff; stroke-width: 1.500; flex: none; }
.tray .dot { fill: #fff; stroke: none; }
.chev { width: 18px; height: 10px; }
.tray .mic { width: 17px; height: 24px; margin-left: 25px; stroke: #d89be0; }
.lang { width: 40px; margin-left: 28px; text-align: center; line-height: 23px; }
.wifi { width: 24px; height: 18px; margin-left: 25px; }
.vol { width: 24px; height: 20px; margin-left: 12px; }
.bat { width: 24px; height: 16px; margin-left: 12px; }
.clock { width: 91px; margin: 0 1px 0 23px; text-align: right; white-space: nowrap; letter-spacing: .1px; }
.count { width: 27px; height: 24px; margin-left: 10px; border-radius: 12px; background: #dba0e5; color: #2b1f2c; font-size: 14px; line-height: 24px; text-align: center; }
```
